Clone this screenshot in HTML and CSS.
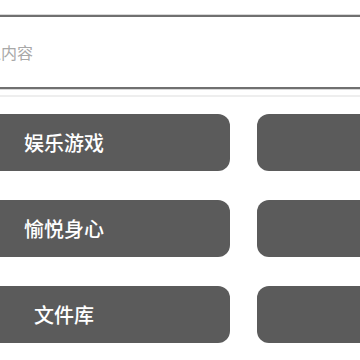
FILE: index.html
```html
<!DOCTYPE html>
<html lang="zh-CN">
<head>
    <meta charset="UTF-8">
    <meta name="viewport" content="width=device-width, initial-scale=1.0">
    <title>菜单</title>
    <link rel="stylesheet" href="styles.css">
</head>
<body>

    <div class="page">
        <!-- Search box -->
        <div class="search">
            <input type="text" class="search-input" placeholder="请输入内容">
        </div>
        <div class="divider"></div>

        <!-- Menu buttons -->
        <div class="menu">
            <div class="menu-item">娱乐游戏</div>
            <div class="menu-item"></div>
            <div class="menu-item">愉悦身心</div>
            <div class="menu-item"></div>
            <div class="menu-item">文件库</div>
            <div class="menu-item"></div>
        </div>
    </div>

</body>
</html>
```

FILE: styles.css
```css
html, body {
    margin: 0;
    padding: 0;
    background: #fff;
    overflow: hidden;
}
body {
    font-family: "Noto Sans CJK SC", "Noto Sans", sans-serif;
    width: 360px;
    height: 360px;
}
.page {
    margin-left: -102px;
    width: 700px;
    padding-top: 15px;
}
.search-input {
    box-sizing: border-box;
    display: block;
    width: 700px;
    height: 74px;
    margin: 0;
    padding: 0 0 0 55px;
    border: 2px solid #707070;
    border-left: none;
    border-right: none;
    box-shadow: 0 -1px 0 #d8d8d8, 0 1px 0 #d8d8d8;
    font-family: inherit;
    font-size: 16px;
    outline: none;
}
.search-input::placeholder {
    color: #a8a8a8;
}
.divider {
    height: 2px;
    background: #eeeeee;
    margin-top: 6px;
}
.menu {
    display: grid;
    grid-template-columns: 332px 332px;
    column-gap: 27px;
    row-gap: 29px;
    margin-top: 17px;
}
.menu-item {
    height: 57px;
    background: #5b5b5b;
    border-radius: 12px;
    color: #fff;
    font-size: 20px;
    font-weight: 500;
    line-height: 57px;
    text-align: center;
}
```
